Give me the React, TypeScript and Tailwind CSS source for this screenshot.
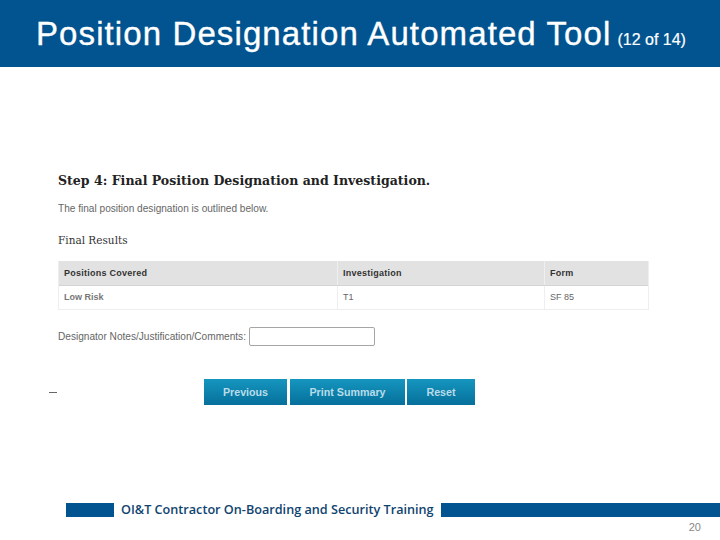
export default function App() {
  return (
    <div className="w-[720px] h-[540px] bg-white flex flex-col overflow-hidden font-['Liberation_Sans',sans-serif]">
      <header className="h-[67px] bg-[#01548f] text-white flex items-baseline pl-9 pt-[13px] shrink-0">
        <h1 className="text-[33px] leading-[42px] tracking-[1.1px] [-webkit-text-stroke:0.35px_white] whitespace-nowrap">
          Position Designation Automated Tool
        </h1>
        <span className="text-[16px] ml-[6px] [-webkit-text-stroke:0.2px_white] whitespace-nowrap">(12 of 14)</span>
      </header>

      <main className="flex-1 flex flex-col pt-[106px] pl-[58px]">
        <h2 className="font-['DejaVu_Serif',serif] font-bold text-[12.55px] leading-4 text-[#222] whitespace-nowrap">
          Step 4: Final Position Designation and Investigation.
        </h2>
        <p className="mt-[14px] text-[10.1px] leading-3 text-[#666]">The final position designation is outlined below.</p>
        <h3 className="mt-[17px] font-['DejaVu_Serif',serif] text-[10.5px] leading-4 text-[#333]">Final Results</h3>

        <div className="mt-[13px] w-[591px] text-[9px] border-b border-x border-[#eeeeee]">
          <div className="grid grid-cols-[279px_207px_1fr] h-[25px] bg-[#e2e2e2] border-b border-[#d4d4d4] font-bold text-[#333] tracking-[0.25px] items-stretch">
            <div className="pl-[5px] pt-[2px] flex items-center border-r border-[#efefef]">Positions Covered</div>
            <div className="pl-[5px] pt-[2px] flex items-center border-r border-[#efefef]">Investigation</div>
            <div className="pl-[5px] pt-[2px] flex items-center">Form</div>
          </div>
          <div className="grid grid-cols-[279px_207px_1fr] h-[23px] text-[#666]">
            <div className="pl-[5px] flex items-center border-r border-[#eeeeee] font-bold text-[#777]">Low Risk</div>
            <div className="pl-[5px] flex items-center border-r border-[#eeeeee]">T1</div>
            <div className="pl-[5px] flex items-center">SF 85</div>
          </div>
        </div>

        <div className="mt-[17px] flex items-center gap-[3px]">
          <label className="text-[10.1px] text-[#666] whitespace-nowrap">Designator Notes/Justification/Comments:</label>
          <input
            type="text"
            className="w-[126px] h-[19px] bg-white border border-[#a5a5a5] rounded-[2px]"
          />
        </div>

        <div className="mt-[33px] flex items-center">
          <div className="w-2 h-px bg-[#666] -ml-[9px] mr-[147px]" />
          <div className="flex text-[10.7px] font-bold text-[#b9dce9]">
            <button className="w-[83px] h-[26px] bg-gradient-to-b from-[#1596bf] to-[#06709b]">Previous</button>
            <button className="ml-[3px] w-[115px] h-[26px] bg-gradient-to-b from-[#1596bf] to-[#06709b]">Print Summary</button>
            <button className="ml-[2px] w-[68px] h-[26px] bg-gradient-to-b from-[#1596bf] to-[#06709b]">Reset</button>
          </div>
        </div>
      </main>

      <footer className="shrink-0 h-[37px] pl-[66px]">
        <div className="flex items-center h-[14px]">
          <div className="w-[48px] h-[14px] bg-[#01548f]" />
          <span className="ml-[7px] mb-[2px] w-[320px] font-['Open_Sans',sans-serif] font-semibold text-[12.65px] leading-[14px] text-[#0f4470] whitespace-nowrap">
            OI&amp;T Contractor On-Boarding and Security Training
          </span>
          <div className="flex-1 h-[14px] bg-[#01548f]" />
        </div>
        <div className="text-right pr-[19px] pt-[3px] text-[11px] leading-[14px] text-[#888]">20</div>
      </footer>
    </div>
  );
}
